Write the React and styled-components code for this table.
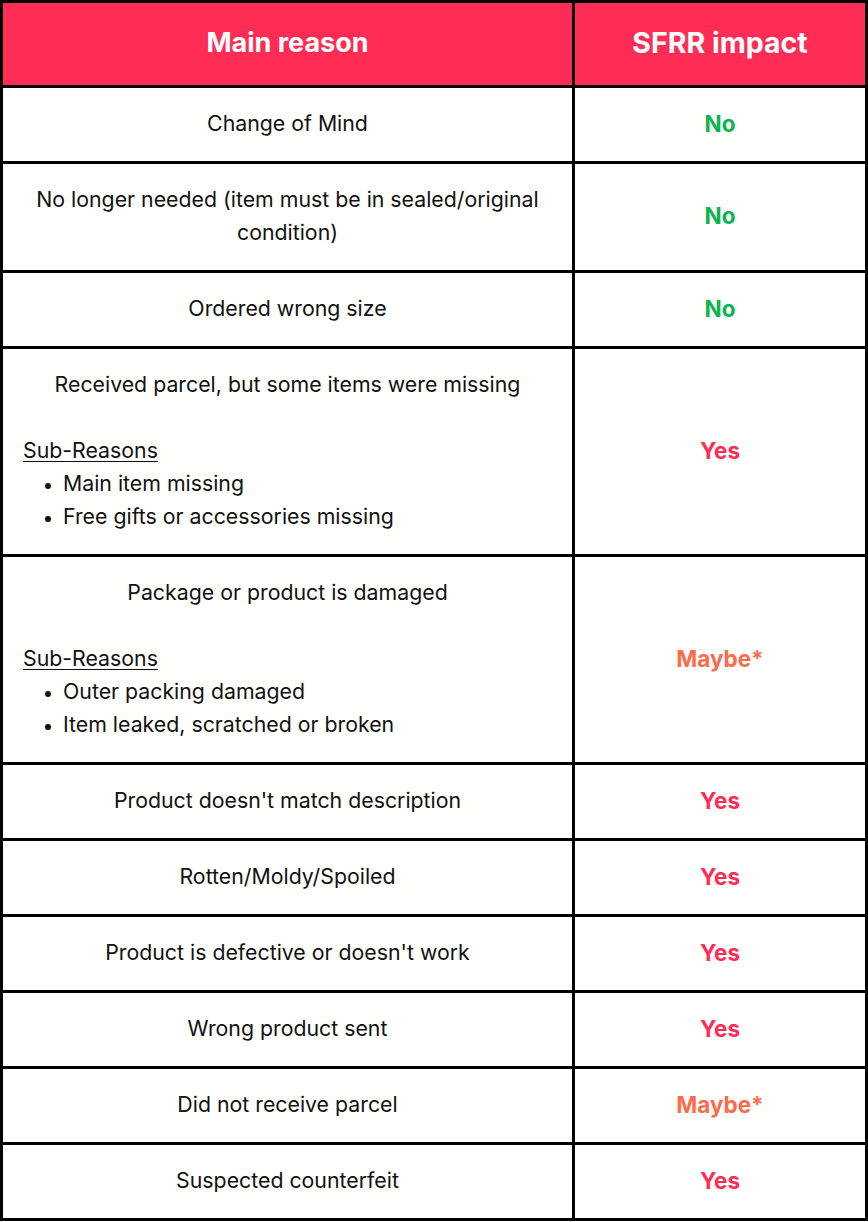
import React from 'react';
import styled, { createGlobalStyle } from 'styled-components';

const GlobalStyle = createGlobalStyle`
    html, body {
        margin: 0;
        padding: 0;
        background: #ffffff;
    }
    body {
        font-family: Inter, "Noto Sans", "Liberation Sans", sans-serif;
    }
`

const Table = styled.div`
    display: grid;
    grid-template-columns: 569px 290px;
    gap: 3px;
    padding: 3px;
    background: #000000;
    width: 868px;
    box-sizing: border-box;
`

const HeadCell = styled.div`
    background: #ff2d55;
    color: #ffffff;
    font-weight: 700;
    font-size: ${p => p.$size || 27}px;
    height: 82px;
    padding-bottom: 4px;
    box-sizing: border-box;
    display: flex;
    align-items: center;
    justify-content: center;
`

const ReasonCell = styled.div`
    background: #fffffd;
    color: #111111;
    font-size: 21.3px;
    line-height: 33px;
    padding: 19px 20px 21px;
    text-align: center;
`

const ImpactCell = styled.div`
    background: #fffffd;
    display: flex;
    align-items: center;
    justify-content: center;
    font-size: 22.5px;
    font-weight: 700;
    padding-bottom: 3px;
    color: ${p => p.$tone === 'no' ? '#0bb44f' : p.$tone === 'maybe' ? '#ff6b4a' : '#ff2d55'};
`

const SubBlock = styled.div`
    text-align: left;
    margin-top: 33px;
`

const SubTitle = styled.div`
    text-decoration: underline;
    text-underline-offset: 3px;
    text-decoration-thickness: 1px;
`

const SubList = styled.ul`
    margin: 0;
    padding-left: 40px;
    li::marker{
        font-size: 18px;
    }
`

const rows = [
    { reason: 'Change of Mind', impact: 'No', tone: 'no' },
    { reason: 'No longer needed (item must be in sealed/original condition)', impact: 'No', tone: 'no' },
    { reason: 'Ordered wrong size', impact: 'No', tone: 'no' },
    { reason: 'Received parcel, but some items were missing', subs: ['Main item missing', 'Free gifts or accessories missing'], impact: 'Yes', tone: 'yes' },
    { reason: 'Package or product is damaged', subs: ['Outer packing damaged', 'Item leaked, scratched or broken'], impact: 'Maybe*', tone: 'maybe' },
    { reason: "Product doesn't match description", impact: 'Yes', tone: 'yes' },
    { reason: 'Rotten/Moldy/Spoiled', impact: 'Yes', tone: 'yes' },
    { reason: "Product is defective or doesn't work", impact: 'Yes', tone: 'yes' },
    { reason: 'Wrong product sent', impact: 'Yes', tone: 'yes' },
    { reason: 'Did not receive parcel', impact: 'Maybe*', tone: 'maybe' },
    { reason: 'Suspected counterfeit', impact: 'Yes', tone: 'yes' },
]

export default function App() {
    return (
        <>
        <GlobalStyle />
        <Table>
            <HeadCell>Main reason</HeadCell>
            <HeadCell $size={28.5}>SFRR impact</HeadCell>
            {rows.map((r, i) => (
                <React.Fragment key={i}>
                    <ReasonCell>
                        {r.reason}
                        {r.subs && (
                            <SubBlock>
                                <SubTitle>Sub-Reasons</SubTitle>
                                <SubList>
                                    {r.subs.map(s => <li key={s}>{s}</li>)}
                                </SubList>
                            </SubBlock>
                        )}
                    </ReasonCell>
                    <ImpactCell $tone={r.tone}>{r.impact}</ImpactCell>
                </React.Fragment>
            ))}
        </Table>
        </>
    )
}
